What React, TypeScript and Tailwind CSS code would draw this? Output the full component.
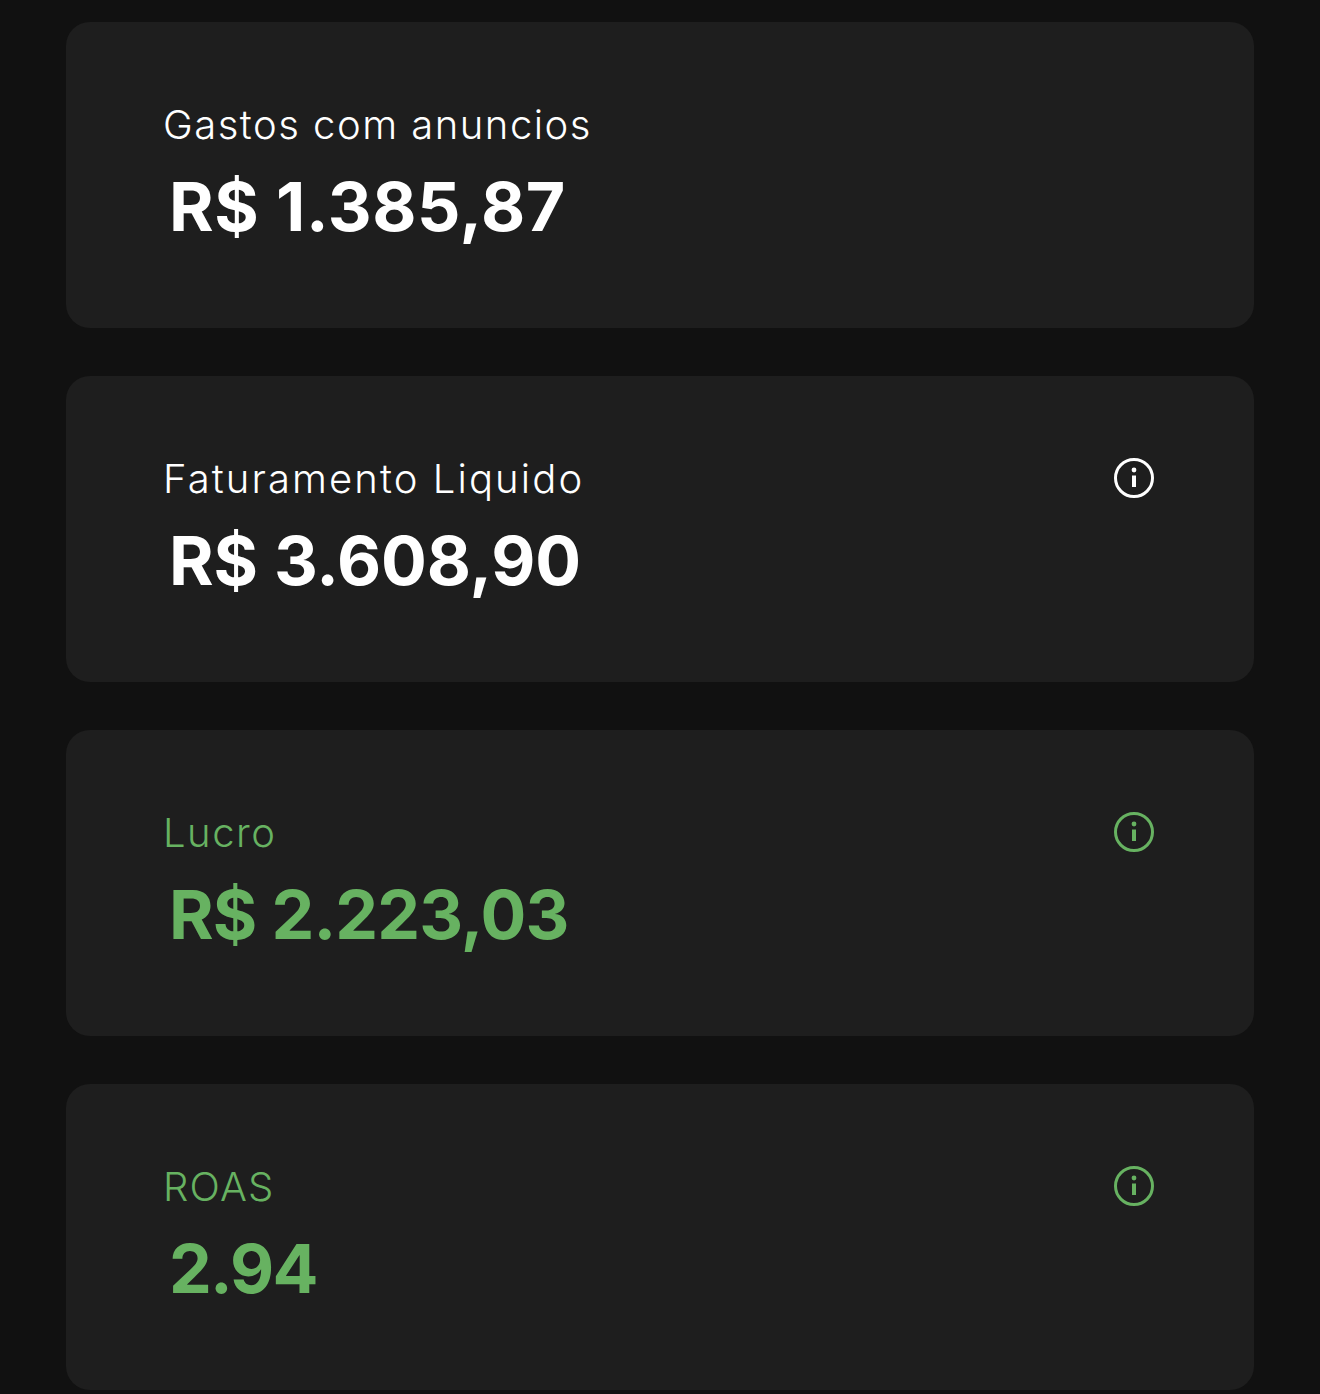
const cards = [
  { label: "Gastos com anuncios", labelTracking: "tracking-[1.5px]", value: "R$ 1.385,87", green: false, info: false, tracking: "tracking-[0.6px]" },
  { label: "Faturamento Liquido", labelTracking: "tracking-[2.1px]", value: "R$ 3.608,90", green: false, info: true, tracking: "tracking-[-0.1px]" },
  { label: "Lucro", labelTracking: "tracking-[1.5px]", value: "R$ 2.223,03", green: true, info: true, tracking: "tracking-[-0.9px]" },
  { label: "ROAS", labelTracking: "tracking-[1.2px]", value: "2.94", green: true, info: true, tracking: "tracking-[-1.8px]" },
];

function InfoIcon() {
  return (
    <svg width="40" height="40" viewBox="0 0 40 40" fill="none" stroke="currentColor">
      <circle cx="20" cy="20" r="18.5" strokeWidth="3" />
      <path d="M20 17.5V29" strokeWidth="4" />
      <circle cx="20" cy="12" r="2.4" fill="currentColor" stroke="none" />
    </svg>
  );
}

export default function App() {
  return (
    <div className="min-h-[1394px] bg-[#111111] px-[66px] pt-[22px] font-['Inter',sans-serif]">
      <div className="flex flex-col gap-12">
        {cards.map((card) => (
          <div
            key={card.label}
            className={
              "flex h-[306px] items-start justify-between rounded-3xl bg-[#1e1e1e] pl-[97px] pr-[100px] pt-[77px] " +
              (card.green ? "text-[#67b261]" : "text-white")
            }
          >
            <div>
              <div className={"h-[52px] text-[40px] font-light leading-[52px] " + card.labelTracking}>
                {card.label}
              </div>
              <div className={"mt-[15px] pl-[6px] text-[68px] font-bold leading-[80px] " + card.tracking}>
                {card.value}
              </div>
            </div>
            {card.info && (
              <div className="pt-[5px]">
                <InfoIcon />
              </div>
            )}
          </div>
        ))}
      </div>
    </div>
  );
}
